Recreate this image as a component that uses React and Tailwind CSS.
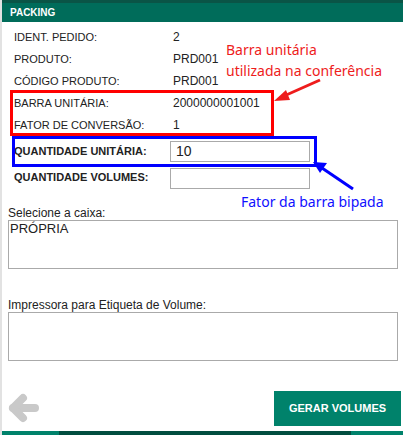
export default function App() {
  const rows = [
    ["IDENT. PEDIDO:", "2"],
    ["PRODUTO:", "PRD001"],
    ["CÓDIGO PRODUTO:", "PRD001"],
    ["BARRA UNITÁRIA:", "2000000001001"],
    ["FATOR DE CONVERSÃO:", "1"],
  ];

  return (
    <div className="relative w-[403px] h-[435px] overflow-hidden bg-white font-['Liberation_Sans',Arial,sans-serif] text-[#222]">
      <div className="flex flex-col h-full border-l-2 border-[#e2e2e2]">
        {/* Header */}
        <div className="h-[22px] border-t-[3px] border-[#0a5446] bg-[#006c5a] flex items-center pl-[8px]">
          <span className="text-white text-[10px] font-bold">PACKING</span>
        </div>

        {/* Details */}
        <div className="pt-[4px] pl-[12px]">
          {rows.map(([label, value]) => (
            <div key={label} className="grid grid-cols-[159px_1fr] h-[22px] items-center">
              <span className="text-[11px]">{label}</span>
              <span className="text-[12px]">{value}</span>
            </div>
          ))}
        </div>

        {/* Quantities */}
        <div className="mt-[5px] pl-[12px] flex flex-col gap-[6px]">
          <div className="grid grid-cols-[156px_140px] items-center">
            <span className="text-[11px] font-bold self-start pt-[2px]">QUANTIDADE UNITÁRIA:</span>
            <div className="h-[21px] border border-[#aaa] flex items-center pl-[5px] text-[14px]">10</div>
          </div>
          <div className="grid grid-cols-[156px_140px] items-center">
            <span className="text-[11px] font-bold self-start pt-[1px]">QUANTIDADE VOLUMES:</span>
            <div className="h-[21px] border border-[#aaa]"></div>
          </div>
        </div>

        {/* Caixa */}
        <div className="mt-[17px] pl-[6px] pr-[5px]">
          <div className="h-[14px] leading-[14px] text-[12px]">Selecione a caixa:</div>
          <div className="h-[49px] border border-[#aaa] px-[1px] text-[13px] leading-[16px]">PRÓPRIA</div>
        </div>

        {/* Impressora */}
        <div className="mt-[29px] pl-[6px] pr-[5px]">
          <div className="h-[14px] leading-[14px] text-[12px]">Impressora para Etiqueta de Volume:</div>
          <div className="h-[49px] border border-[#aaa]"></div>
        </div>

        {/* Actions */}
        <div className="mt-[30px] h-[35px] flex items-center justify-between pl-[6px] pr-[2px]">
          <svg width="32" height="32" viewBox="0 0 32 32" className="-mt-[1px]">
            <g stroke="#c9c9c9" strokeWidth="8" strokeLinecap="round" strokeLinejoin="round" fill="none">
              <path d="M5 16H27" />
              <path d="M15 6L5 16L15 26" />
            </g>
          </svg>
          <button className="h-[35px] w-[127px] bg-[#00826b] text-white text-[11px] font-bold">
            GERAR VOLUMES
          </button>
        </div>

        {/* Bottom bar */}
        <div className="mt-[5px] h-[4px] flex">
          <div className="w-[57px] bg-[#00826b]"></div>
          <div className="w-[292px] bg-[#014d3f]"></div>
          <div className="flex-1 bg-[#00826b]"></div>
        </div>
      </div>

      {/* Annotations */}
      <div className="absolute left-[10px] top-[90px] w-[264px] h-[46px] border-[3px] border-[#ff0000]"></div>
      <div className="absolute left-[12px] top-[136px] w-[305px] h-[31px] border-[3px] border-[#0000ff]"></div>
      <div className="absolute left-[226px] top-[39px] text-[14px] leading-[21px] text-[#ee1c1c] font-['Noto_Sans',sans-serif]">
        <div>Barra unitária</div>
        <div>utilizada na conferência</div>
      </div>
      <div className="absolute left-[241px] top-[192px] text-[14px] leading-[20px] text-[#1010ff] font-['Noto_Sans',sans-serif]">
        Fator da barra bipada
      </div>
      <svg className="absolute left-0 top-0 pointer-events-none" width="403" height="435">
        <line x1="320" y1="80" x2="284" y2="96" stroke="#ee1c1c" strokeWidth="3" />
        <polygon points="274,101 286,90 290,100" fill="#ee1c1c" />
        <line x1="353" y1="189" x2="322" y2="168" stroke="#0000ff" strokeWidth="3" />
        <polygon points="313,162 327,163 320,173" fill="#0000ff" />
      </svg>
    </div>
  );
}
